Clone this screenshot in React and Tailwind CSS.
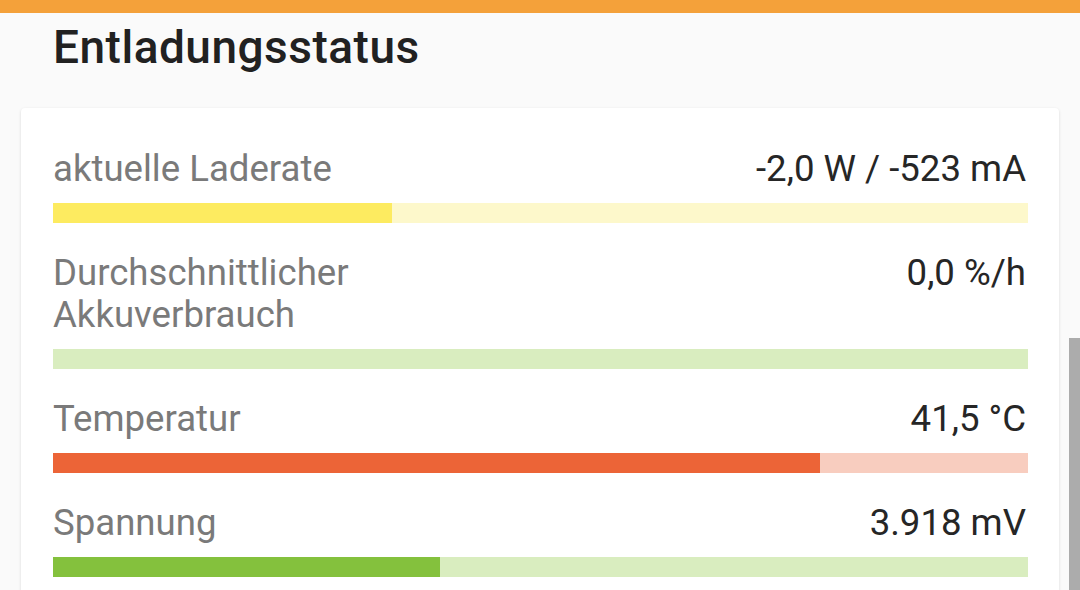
const rows = [
  {
    label: ["aktuelle Laderate"],
    value: "-2,0 W / -523 mA",
    fill: 339,
    fg: "bg-[#fdeb60]",
    bg: "bg-[#fdf8cb]",
  },
  {
    label: ["Durchschnittlicher", "Akkuverbrauch"],
    value: "0,0 %/h",
    fill: 0,
    fg: "bg-[#84c13d]",
    bg: "bg-[#d9edbf]",
  },
  {
    label: ["Temperatur"],
    value: "41,5 °C",
    fill: 767,
    fg: "bg-[#ec6437]",
    bg: "bg-[#f8cdbf]",
  },
  {
    label: ["Spannung"],
    value: "3.918 mV",
    fill: 387,
    fg: "bg-[#84c13d]",
    bg: "bg-[#d9edbf]",
  },
];

function StatusRow({ row }) {
  return (
    <div className="flex flex-col">
      <div className="flex justify-between items-start text-[36.6px] leading-[42px]">
        <div className="text-[#7a7a7a]">
          {row.label.map((l) => (
            <div key={l}>{l}</div>
          ))}
        </div>
        <div className="text-[#262626] pr-[2px]">{row.value}</div>
      </div>
      <div className={"mt-[13px] h-[20px] w-full flex " + row.bg}>
        <div className={"h-full " + row.fg} style={{ width: row.fill }} />
      </div>
    </div>
  );
}

export default function App() {
  return (
    <div
      className="relative w-[1080px] h-[590px] overflow-hidden bg-[#fafafa]"
      style={{ fontFamily: "Roboto, 'Noto Sans', sans-serif" }}
    >
      <div className="h-[13px] bg-[#f4a13a]" />

      <h1 className="mt-[7px] ml-[53px] text-[46px] leading-[54px] font-medium tracking-[0.5px] text-[#212121]">
        Entladungsstatus
      </h1>

      <div className="mt-[34px] ml-[21px] w-[1038px] bg-white rounded-[4px] shadow-[0_1px_3px_rgba(0,0,0,0.14)] pt-[40px] pl-[32px] pr-[31px] pb-[30px] flex flex-col gap-[29px]">
        {rows.map((row) => (
          <StatusRow key={row.value} row={row} />
        ))}
      </div>

      <div className="absolute right-0 top-[338px] w-[11px] h-[252px] bg-[#acacac]" />
    </div>
  );
}
